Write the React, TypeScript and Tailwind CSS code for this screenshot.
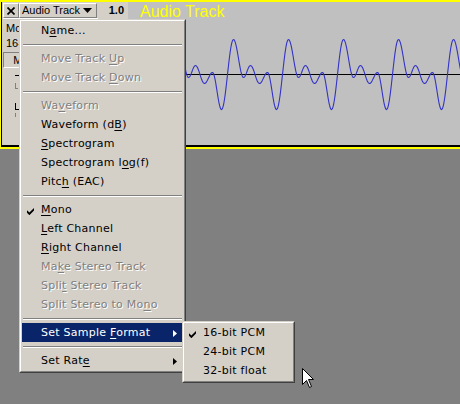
import React from 'react'

type Entry =
  | 'sep'
  | { label: string; u?: number; disabled?: boolean; checked?: boolean; sub?: boolean; active?: boolean }

const mainItems: Entry[] = [
  { label: 'Name...', u: 1 },
  'sep',
  { label: 'Move Track Up', u: 11, disabled: true },
  { label: 'Move Track Down', u: 11, disabled: true },
  'sep',
  { label: 'Waveform', u: 2, disabled: true },
  { label: 'Waveform (dB)', u: 11 },
  { label: 'Spectrogram', u: 0 },
  { label: 'Spectrogram log(f)', u: 13 },
  { label: 'Pitch (EAC)', u: 4 },
  'sep',
  { label: 'Mono', u: 0, checked: true },
  { label: 'Left Channel', u: 0 },
  { label: 'Right Channel', u: 0 },
  { label: 'Make Stereo Track', u: 2, disabled: true },
  { label: 'Split Stereo Track', u: 4, disabled: true },
  { label: 'Split Stereo to Mono', u: 18, disabled: true },
  'sep',
  { label: 'Set Sample Format', u: 11, sub: true, active: true },
  'sep',
  { label: 'Set Rate', u: 7, sub: true },
]

const formatItems: Entry[] = [
  { label: '16-bit PCM', checked: true },
  { label: '24-bit PCM' },
  { label: '32-bit float' },
]

// extrema of one period of the test tone, x relative to a trough at x=221
const KEYS: [number, number][] = [[0, -35], [12, 35], [22, -3], [29, 9], [38, -9], [46, 2], [55, -35]]

function wave(x: number) {
  const p = (((x - 221) % 55) + 55) % 55
  for (let i = 0; i < KEYS.length - 1; i++) {
    const [x0, y0] = KEYS[i]
    const [x1, y1] = KEYS[i + 1]
    if (p >= x0 && p <= x1) {
      const t = (p - x0) / (x1 - x0)
      return y0 + ((y1 - y0) * (1 - Math.cos(Math.PI * t))) / 2
    }
  }
  return 0
}

const wavePoints = (() => {
  const pts: string[] = []
  for (let x = 128; x <= 460; x += 0.5) {
    pts.push(`${(x - 128 + 0.5).toFixed(1)},${(72.5 - wave(x)).toFixed(2)}`)
  }
  return pts.join(' ')
})()

function Label({ text, u }: { text: string; u?: number }) {
  if (u === undefined) return <span>{text}</span>
  return (
    <span>
      {text.slice(0, u)}
      <span className="underline underline-offset-[2px]">{text[u]}</span>
      {text.slice(u + 1)}
    </span>
  )
}

function Check({ white }: { white?: boolean }) {
  return (
    <svg width="7" height="7" viewBox="0 0 7 7" className="mt-[3px]">
      <polygon points="0,2.2 2.4,4.6 7,0 7,2.6 2.4,7.2 0,4.8" fill={white ? '#fff' : '#000'} />
    </svg>
  )
}

function Arrow({ white }: { white?: boolean }) {
  return (
    <svg width="4" height="7" viewBox="0 0 4 7" className="ml-auto mr-[6px] mt-px">
      <polygon points="0,0 4,3.5 0,7" fill={white ? '#fff' : '#000'} />
    </svg>
  )
}

function MenuBox({ items, lead, checkPad }: { items: Entry[]; lead: string; checkPad: string }) {
  return (
    <div className="border border-t-[#d4d0c8] border-l-[#d4d0c8] border-r-[#404040] border-b-[#404040] bg-[#d4d0c8]">
      <div className="border border-t-white border-l-white border-r-[#808080] border-b-[#808080] px-px pb-px">
        {items.map((it, i) =>
          it === 'sep' ? (
            <div key={i} className="h-[9px] px-px pt-[4px]">
              <div className="h-[2px] border-t border-b border-t-[#808080] border-b-white" />
            </div>
          ) : (
            <div
              key={i}
              className={`flex h-[19px] items-center whitespace-nowrap leading-[19px] ${
                it.active ? 'bg-[#0a246a] text-white' : it.disabled ? 'text-[#808080] [text-shadow:1px_1px_0_#fff]' : 'text-black'
              }`}
            >
              <div className={`flex h-full shrink-0 items-center ${lead} ${checkPad}`}>
                {it.checked && <Check white={it.active} />}
              </div>
              <Label text={it.label} u={it.u} />
              {it.sub && <Arrow white={it.active} />}
            </div>
          )
        )}
      </div>
    </div>
  )
}

function TrackPanel() {
  return (
    <div className="h-[149px] border-t-2 border-b-2 border-l border-[#ffff00]">
      <div className="flex h-full border-b-2 border-l border-black">
        {/* track control panel */}
        <div className="flex w-[96px] shrink-0 flex-col bg-[#d4d0c8] pl-px pt-px font-['Liberation_Sans',sans-serif] tracking-normal">
          <div className="flex h-[16px] border-b border-b-white">
            <div className="flex w-[16px] shrink-0 items-center justify-center border border-t-white border-l-white border-r-[#808080] border-b-[#808080]">
              <svg width="8" height="8" viewBox="0 0 8 8">
                <path d="M0.5 0.5 L7.5 7.5 M7.5 0.5 L0.5 7.5" stroke="#000" strokeWidth="1.7" />
              </svg>
            </div>
            <div className="flex w-[78px] shrink-0 items-center whitespace-nowrap border border-t-white border-l-white border-r-[#808080] border-b-[#808080] pl-[2px] text-[11px] leading-none">
              <span>Audio Track</span>
              <svg width="9" height="5" viewBox="0 0 9 5" className="ml-auto mr-[4px] shrink-0">
                <polygon points="0,0 9,0 4.5,5" fill="#000" />
              </svg>
            </div>
          </div>
          <div className="mt-[2px] whitespace-nowrap pl-[3px] leading-[15px]">Mono</div>
          <div className="whitespace-nowrap pl-[3px] leading-[15px]">16-bit PCM</div>
          <div className="mt-px flex h-[16px] w-[45px] items-center justify-center border border-t-[#808080] border-l-[#808080] border-r-white border-b-white leading-none">
            Mute
          </div>
          <div className="ml-[12px] mt-[7px] h-px w-[4px] bg-black" />
          <div className="ml-[12px] mt-[7px] h-[6px] w-[3px] border-l border-b border-[#808080]" />
          <div className="ml-[12px] mt-[14px] h-[7px] w-[4px] border-l border-b border-black" />
          <div className="ml-[12px] mt-[3px] h-[4px] w-px bg-[#808080]" />
        </div>
        {/* vertical ruler */}
        <div className="w-[30px] shrink-0 bg-[#d4d0c8] pr-[4px] pt-[2px] text-right font-['Liberation_Sans',sans-serif] text-[11px] font-bold leading-[13px] tracking-normal">
          1.0
        </div>
        {/* waveform */}
        <div className="relative flex-1 overflow-hidden bg-[#c0c0c0]">
          <svg width="332" height="143" viewBox="0 0 332 143" className="block">
            <line x1="0" y1="72.5" x2="332" y2="72.5" stroke="#000" strokeWidth="1" />
            <polyline points={wavePoints} fill="none" stroke="#3232c8" strokeWidth="1.1" />
          </svg>
          <span className="absolute left-[12px] top-[2px] whitespace-nowrap font-['Liberation_Sans',sans-serif] text-[16px] leading-none tracking-normal text-[#ffff00]">
            Audio Track
          </span>
        </div>
      </div>
    </div>
  )
}

export default function App() {
  return (
    <div className="relative h-[404px] w-[460px] select-none overflow-hidden bg-[#808080] font-['DejaVu_Sans',sans-serif] text-[11px] tracking-[0.25px] text-black">
      <TrackPanel />

      <div className="absolute left-[19px] top-[19px] w-[167px]">
        <MenuBox items={mainItems} lead="w-[19px]" checkPad="pl-[5px]" />
      </div>

      <div className="absolute left-[182px] top-[321px] w-[113px]">
        <MenuBox items={formatItems} lead="w-[18px]" checkPad="pl-[4px]" />
      </div>

      <svg width="13" height="21" viewBox="0 0 13 21" className="absolute left-[302px] top-[368px]">
        <path
          d="M0.5 0.5 L0.5 16.5 L4.5 12.5 L7.5 19.5 L9.5 18.5 L6.5 11.5 L11.5 11.5 Z"
          fill="#fff"
          stroke="#000"
          strokeWidth="1"
          strokeLinejoin="miter"
        />
      </svg>
    </div>
  )
}
